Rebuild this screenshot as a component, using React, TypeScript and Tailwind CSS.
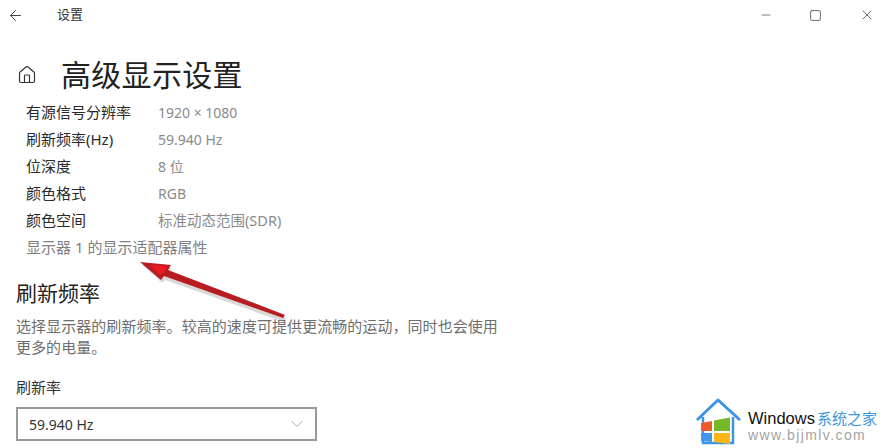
import { ArrowLeft, ChevronDown, Home, Minus, Square, X } from 'lucide-react';

const specs = [
  { label: '有源信号分辨率', value: '1920 × 1080' },
  { label: '刷新频率(Hz)', value: '59.940 Hz' },
  { label: '位深度', value: '8 位' },
  { label: '颜色格式', value: 'RGB' },
  { label: '颜色空间', value: '标准动态范围(SDR)', wide: true },
];

function RedArrow() {
  return (
    <svg className="absolute left-[130px] top-[252px] pointer-events-none" width="170" height="80" viewBox="0 0 170 80">
      <g transform="translate(-130 -252)">
        <path d="M141 263 L171 266 L168 271 L285 316 L283 320 L164 278 L161 281 Z" fill="#000" opacity="0.15" transform="translate(1 2)" />
        <path d="M140 262 L171 265 L168 270 L285 315 L283 318 L164 276 L161 280 Z" fill="#b91c20" />
        <path d="M150 265 L168 266 L165 271 L160 275 Z" fill="#ea1c22" />
      </g>
    </svg>
  );
}

function Watermark() {
  return (
    <div className="absolute left-[694px] top-[396px] w-[190px] h-[52px] bg-white flex items-start">
      <svg width="50" height="50" viewBox="0 0 50 50" className="shrink-0">
        <path d="M3 24 L24 4 L46 24" fill="none" stroke="#3b94e6" strokeWidth="3" strokeLinejoin="round" />
        <path d="M9 21 L9 47 L39 47 L39 21" fill="none" stroke="#3b94e6" strokeWidth="2.5" />
        <path d="M7 27 L18 25 L18 35 L7 35 Z" fill="#ee5a2a" />
        <path d="M20 24.500 L36 21.500 L36 35 L20 35 Z" fill="#76b82a" />
        <path d="M7 37 L18 37 L18 46 L7 45 Z" fill="#3f97e8" />
        <path d="M20 37 L36 37 L36 48 L20 46 Z" fill="#fbb516" />
      </svg>
      <div className="ml-[4px] mt-[12px] flex flex-col">
        <div className="flex items-baseline h-[20px] leading-[20px] whitespace-nowrap">
          <span className="text-[16.500px] font-medium text-[#111] font-['Liberation_Sans',sans-serif]">Windows</span>
          <span className="ml-[2px] text-[15px] text-[#3c95e0] font-['Noto_Sans_CJK_SC',sans-serif]">系统之家</span>
        </div>
        <span className="text-[14px] leading-[14px] tracking-[1.4px] text-[#a3a3a3] font-['Liberation_Sans',sans-serif]">www.bjjmlv.com</span>
      </div>
    </div>
  );
}

export default function App() {
  return (
    <div className="relative w-[884px] h-[448px] overflow-hidden bg-white text-[#1a1a1a] font-['Noto_Sans','Noto_Sans_CJK_SC',sans-serif]">
      {/* Title bar */}
      <div className="flex items-center h-[30px]">
        <ArrowLeft className="ml-[7px] w-[17px] h-[17px] text-[#333]" strokeWidth={1.3} />
        <span className="ml-[33px] text-[13px] text-[#333]">设置</span>
        <div className="ml-auto flex items-center">
          <Minus className="mr-[36px] w-[14px] h-[14px] text-[#555]" strokeWidth={1.3} />
          <Square className="mr-[37px] w-[13px] h-[13px] text-[#555]" strokeWidth={1.6} absoluteStrokeWidth />
          <X className="mr-[9px] w-[16px] h-[16px] text-[#555]" strokeWidth={1.3} />
        </div>
      </div>

      {/* Page heading */}
      <div className="flex items-center h-[49px] mt-[20px] pl-[17px]">
        <Home className="w-[20px] h-[20px] text-[#333]" strokeWidth={1.4} />
        <h1 className="ml-[24px] text-[30px] leading-[40px] tracking-[0.3px] font-normal text-[#222]">高级显示设置</h1>
      </div>

      {/* Display info */}
      <div className="pl-[26px] flex flex-col">
        {specs.map((row) => (
          <div key={row.label} className="flex items-center h-[27px]">
            <span className="w-[132px] text-[15px] text-[#2a2a2a]">{row.label}</span>
            <span className={row.wide ? 'text-[14.500px] text-[#8a8a8a]' : 'text-[14px] text-[#8a8a8a]'}>{row.value}</span>
          </div>
        ))}
        <span className="h-[26px] leading-[26px] text-[15px] text-[#808080]">显示器 1 的显示适配器属性</span>
      </div>

      {/* Refresh rate */}
      <div className="pl-[16px]">
        <h2 className="mt-[18px] text-[21px] leading-[30px] font-normal text-[#222]">刷新频率</h2>
        <p className="mt-[7px] w-[490px] text-[15px] leading-[21px] tracking-[0.06px] text-[#6e6e6e] font-['Noto_Sans_CJK_SC',sans-serif]">
          选择显示器的刷新频率。较高的速度可提供更流畅的运动，同时也会使用更多的电量。
        </p>
        <div className="mt-[20px] text-[15px] leading-[20px] text-[#333]">刷新率</div>
        <div className="mt-[10px] flex items-center justify-between w-[301px] h-[34px] border-2 border-[#999] pl-[11px] pr-[8px] text-[14px] text-[#333]">
          <span>59.940 Hz</span>
          <ChevronDown className="w-[20px] h-[20px] text-[#999]" strokeWidth={1} />
        </div>
      </div>

      <RedArrow />
      <Watermark />
    </div>
  );
}
